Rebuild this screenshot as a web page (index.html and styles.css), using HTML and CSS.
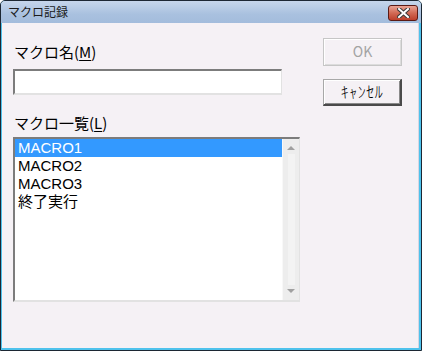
FILE: index.html
```html
<!DOCTYPE html>
<html lang="ja">
<head>
    <meta charset="UTF-8">
    <title>マクロ記録</title>
    <link rel="stylesheet" href="styles.css">
</head>
<body>
<div class="window">
    <div class="titlebar">
        <span class="title">マクロ記録</span>
        <div class="close-btn">
            <svg width="13" height="10" viewBox="0 0 13 10">
                <path d="M2 1 L11 9 M11 1 L2 9" stroke="#3a3a3a" stroke-width="4" stroke-linecap="square"/>
                <path d="M2 1 L11 9 M11 1 L2 9" stroke="#ffffff" stroke-width="2" stroke-linecap="square"/>
            </svg>
        </div>
    </div>
    <div class="frame">
        <div class="content">
            <div class="left-col">
                <label class="label first">マクロ名(<u>M</u>)</label>
                <div class="text-input"></div>
                <label class="label second">マクロ一覧(<u>L</u>)</label>
                <div class="listbox">
                    <ul class="items">
                        <li class="selected">MACRO1</li>
                        <li>MACRO2</li>
                        <li>MACRO3</li>
                        <li>終了実行</li>
                    </ul>
                    <div class="scrollbar">
                        <span class="arrow up"></span>
                        <span class="track"></span>
                        <span class="arrow down"></span>
                    </div>
                </div>
            </div>
            <div class="right-col">
                <div class="btn disabled">OK</div>
                <div class="btn cancel">ｷｬﾝｾﾙ</div>
            </div>
        </div>
    </div>
</div>
</body>
</html>
```

FILE: styles.css
```css
* {
    box-sizing: border-box;
}
body {
    margin: 0;
    font-family: "Noto Sans CJK JP", "DejaVu Sans", sans-serif;
}
.window {
    width: 422px;
    height: 351px;
    border: 1px solid #1c2733;
    border-radius: 5px 5px 0 0;
    display: flex;
    flex-direction: column;
    overflow: hidden;
    background: #4ec2ec;
}
.titlebar {
    height: 22px;
    background: linear-gradient(#c6d6eb, #a9c1df 60%, #a3bcdc);
    display: flex;
    align-items: center;
    justify-content: space-between;
    padding: 0 3px 0 7px;
}
.title {
    font-size: 12px;
    color: #1b1b1b;
    line-height: 14px;
}
.close-btn {
    width: 30px;
    height: 16px;
    border: 1px solid #5a1a14;
    border-radius: 3px;
    background: linear-gradient(#e9a394, #d26a55 50%, #bd3f2b);
    display: flex;
    align-items: center;
    justify-content: center;
    margin-top: 2px;
}
.frame {
    flex: 1;
    padding: 0 2px 2px 1px;
    display: flex;
}
.content {
    flex: 1;
    background: #f5f1f5;
    border-right: 1px solid #d6d6e2;
    display: flex;
    padding: 15px 0 0 11px;
    gap: 23px;
}
.left-col {
    width: 287px;
    display: flex;
    flex-direction: column;
}
.label {
    font-size: 15px;
    line-height: 18px;
    color: #000;
    padding-left: 1px;
}
.label u {
    text-underline-offset: 2px;
}
.label.first {
    margin-top: 5px;
    margin-bottom: 8px;
    width: 269px;
}
.label.second {
    margin-top: 19px;
    margin-bottom: 5px;
}
.text-input {
    width: 269px;
    height: 26px;
    background: #fff;
    border-top: 2px solid #7c7c7c;
    border-left: 2px solid #7c7c7c;
    border-right: 1px solid #e2e2e2;
    border-bottom: 2px solid #e2e2e2;
}
.listbox {
    height: 165px;
    background: #fff;
    border-top: 2px solid #7c7c7c;
    border-left: 2px solid #7c7c7c;
    border-right: 1px solid #e2e2e2;
    border-bottom: 2px solid #e2e2e2;
    display: flex;
}
.items {
    list-style: none;
    margin: 0;
    padding: 0;
    flex: 1;
}
.items li {
    height: 18px;
    line-height: 18px;
    font-family: "Liberation Sans", "Noto Sans CJK JP", sans-serif;
    font-size: 15px;
    padding-left: 3px;
    color: #000;
}
.items li.selected {
    background: #3399ff;
    color: #fff;
}
.scrollbar {
    width: 17px;
    background: #ededed;
    border-left: 1px solid #f8f8f8;
    display: flex;
    flex-direction: column;
    align-items: center;
}
.track {
    flex: 1;
    width: 7px;
    background: #f3f3f3;
}
.arrow {
    width: 0;
    height: 0;
    border-left: 4px solid transparent;
    border-right: 4px solid transparent;
}
.arrow.up {
    border-bottom: 4px solid #a0a0a0;
    margin: 7px 0 4px;
}
.arrow.down {
    border-top: 4px solid #a0a0a0;
    margin: 4px 0 7px;
}
.right-col {
    display: flex;
    flex-direction: column;
    gap: 13px;
}
.btn {
    width: 79px;
    height: 27px;
    font-size: 14px;
    line-height: 22px;
    text-align: center;
    color: #000;
    background: #f5f1f5;
    border-top: 1px solid #a8a8a8;
    border-left: 1px solid #a8a8a8;
    border-right: 2px solid #4a4a4a;
    border-bottom: 2px solid #4a4a4a;
    box-shadow: inset 1px 1px 0 #ffffff, inset -1px -1px 0 #8a8a8a;
}
.btn.cancel {
    font-size: 16px;
    font-weight: 300;
    letter-spacing: 0.5px;
}
.btn.disabled {
    color: #a3a3a3;
    border: 1px solid #c6c6c6;
    box-shadow: inset 1px 1px 0 #ffffff, inset -1px -1px 0 #dcdcdc;
    line-height: 24px;
    height: 28px;
}
```
